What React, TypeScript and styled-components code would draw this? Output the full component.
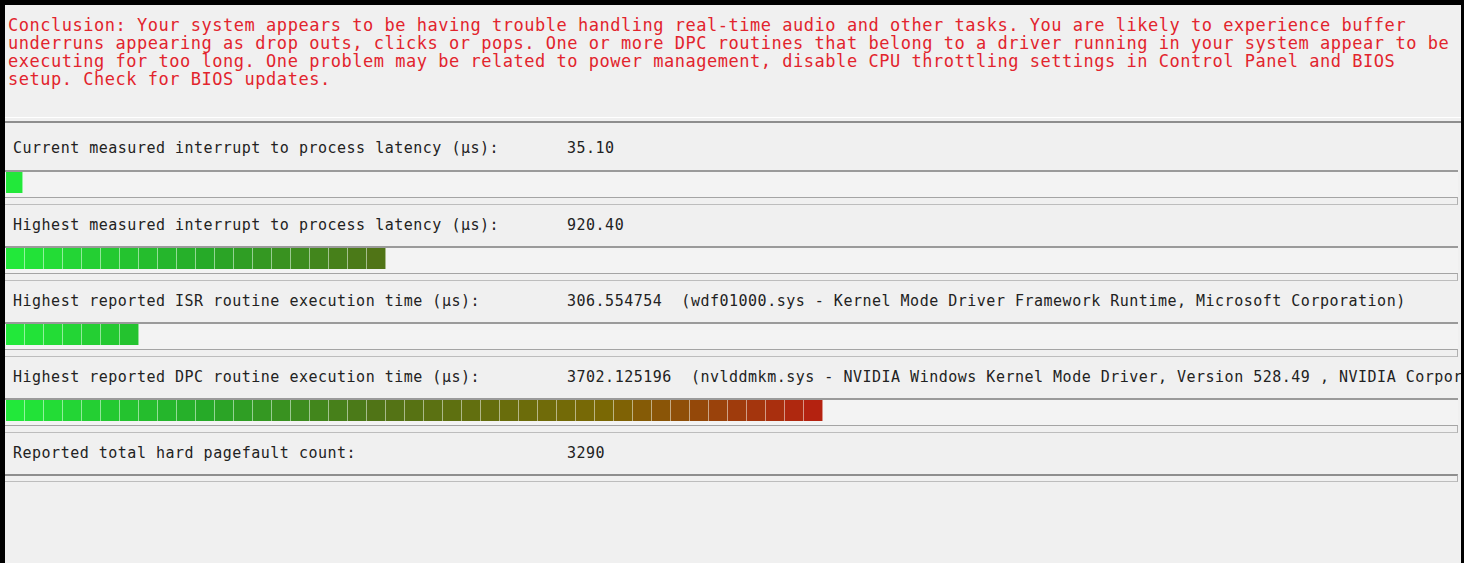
import { createGlobalStyle } from "styled-components";
import styled from "styled-components";

const Global = createGlobalStyle`
  html, body {
    margin: 0;
    padding: 0;
    background: #ffffff;
  }
`;

const Frame = styled.div`
  box-sizing: border-box;
  width: 1464px;
  height: 563px;
  border-top: 5px solid #000;
  border-left: 5px solid #000;
  border-right: 3px solid #000;
  background: #f0f0f0;
  overflow: hidden;
  font-family: "DejaVu Sans Mono", "Liberation Mono", monospace;
`;

const Conclusion = styled.div`
  box-sizing: border-box;
  height: 112px;
  padding: 11px 0 0 3px;
  color: #e2242d;
  font-size: 17px;
  line-height: 18px;
  letter-spacing: 0.52px;
  white-space: pre;
`;

const Divider = styled.div`
  height: 3px;
  border-top: 1px solid #ffffff;
  border-bottom: 2px solid #8e8e8e;
`;

const Section = styled.section`
  display: flex;
  flex-direction: column;
`;

const LabelRow = styled.div<{ $first?: boolean }>`
  display: grid;
  grid-template-columns: 554px 1fr;
  align-items: center;
  height: ${(p) => (p.$first ? "47px" : "41px")};
  padding-left: 8px;
  padding-top: ${(p) => (p.$first ? "3px" : "0")};
  padding-bottom: 1px;
  box-sizing: border-box;
  color: #222222;
  font-size: 15px;
  letter-spacing: 0.5px;
  white-space: pre;
`;

const Track = styled.div`
  display: flex;
  height: 25px;
  padding-left: 1px;
  border-top: 2px solid #9a9a9a;
  background: #f3f3f3;
  margin-right: 3px;
`;

const Segment = styled.div<{ $w: number }>`
  width: ${(p) => p.$w}px;
  height: 21px;
  border-right: 1px solid rgba(255, 255, 255, 0.5);
  flex: none;
`;

const Splitter = styled.div<{ $dark?: boolean }>`
  box-sizing: border-box;
  height: 8px;
  margin-right: 3px;
  border-top: ${(p) => (p.$dark ? "2px solid #8e8e8e" : "1px solid #a4a4a4")};
  border-bottom: 1px solid #bdbdbd;
  border-right: 1px solid #b0b0b0;
`;

const stops: [number, number[]][] = [
  [0, [34, 232, 58]],
  [10, [38, 170, 40]],
  [19, [80, 116, 22]],
  [31, [122, 104, 4]],
  [42, [180, 34, 16]],
];

function segColor(i: number) {
  for (let s = 0; s < stops.length - 1; s++) {
    const [a, ca] = stops[s];
    const [b, cb] = stops[s + 1];
    if (i <= b) {
      const t = (i - a) / (b - a);
      const c = ca.map((v, k) => Math.round(v + (cb[k] - v) * t));
      return `rgb(${c[0]}, ${c[1]}, ${c[2]})`;
    }
  }
  const last = stops[stops.length - 1][1];
  return `rgb(${last[0]}, ${last[1]}, ${last[2]})`;
}

const conclusion = [
  "Conclusion: Your system appears to be having trouble handling real-time audio and other tasks. You are likely to experience buffer",
  "underruns appearing as drop outs, clicks or pops. One or more DPC routines that belong to a driver running in your system appear to be",
  "executing for too long. One problem may be related to power management, disable CPU throttling settings in Control Panel and BIOS",
  "setup. Check for BIOS updates.",
];

type Row = { label: string; value: string; segments?: number; firstWidth?: number };

const rows: Row[] = [
  { label: "Current measured interrupt to process latency (µs):", value: "35.10", segments: 1, firstWidth: 16 },
  { label: "Highest measured interrupt to process latency (µs):", value: "920.40", segments: 20 },
  {
    label: "Highest reported ISR routine execution time (µs):",
    value: "306.554754  (wdf01000.sys - Kernel Mode Driver Framework Runtime, Microsoft Corporation)",
    segments: 7,
  },
  {
    label: "Highest reported DPC routine execution time (µs):",
    value: "3702.125196  (nvlddmkm.sys - NVIDIA Windows Kernel Mode Driver, Version 528.49 , NVIDIA Corporation)",
    segments: 43,
  },
  { label: "Reported total hard pagefault count:", value: "3290" },
];

export default function App() {
  return (
    <>
      <Global />
      <Frame>
        <Conclusion>
          {conclusion.map((line) => (
            <div key={line}>{line}</div>
          ))}
        </Conclusion>
        <Divider />
        {rows.map((row, idx) => (
          <Section key={row.label}>
            <LabelRow $first={idx === 0}>
              <span>{row.label}</span>
              <span>{row.value}</span>
            </LabelRow>
            {row.segments ? (
              <Track>
                {Array.from({ length: row.segments }, (_, i) => (
                  <Segment
                    key={i}
                    $w={i === 0 && row.firstWidth ? row.firstWidth : 18}
                    style={{ background: segColor(i) }}
                  />
                ))}
              </Track>
            ) : null}
            <Splitter $dark={!row.segments} />
          </Section>
        ))}
      </Frame>
    </>
  );
}
